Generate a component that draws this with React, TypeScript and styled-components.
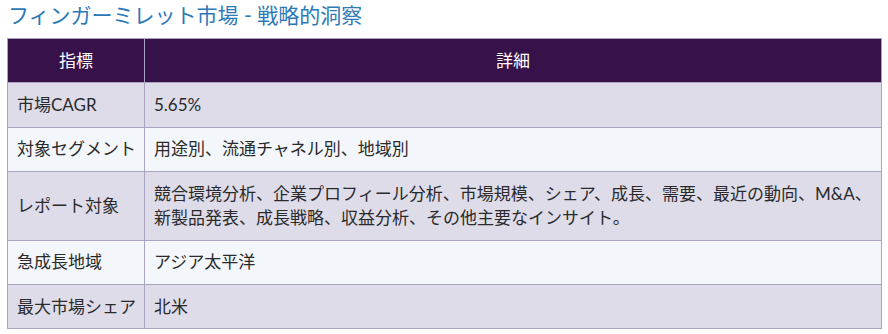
import React from "react";
import styled, { createGlobalStyle } from "styled-components";

const GlobalStyle = createGlobalStyle`
  html, body {
    margin: 0;
    padding: 0;
    background: #ffffff;
  }
  body {
    font-family: Lato, "Noto Sans CJK JP", sans-serif;
    color: #222;
  }
`;

const Page = styled.div`
  padding: 3px 7px 0 7px;
  width: 875px;
`;

const Title = styled.h3`
  margin: 0 0 11px 1px;
  font-size: 21px;
  font-weight: 400;
  line-height: 24px;
  color: #2b79b7;
`;

const Table = styled.table`
  width: 875px;
  border-collapse: collapse;
  table-layout: fixed;
  font-size: 17px;
  line-height: 24px;
`;

const HeadCell = styled.th`
  background: #371149;
  color: #ffffff;
  font-weight: 400;
  text-align: center;
  padding: 9.7px 10px;
  border: 1px solid #aaa3c2;
`;

const Row = styled.tr<{ $even: boolean }>`
  background: ${({ $even }) => ($even ? "#f3f6fa" : "#dfdcea")};
`;

const Cell = styled.td`
  padding: 9.7px 4px 9.7px 9px;
  border: 1px solid #aaa3c2;
  color: #2a2a2a;
  vertical-align: middle;
  white-space: nowrap;

  & + & {
    padding: 9.7px 9px;
    white-space: normal;
  }
`;

const rows = [
  { label: "市場CAGR", value: "5.65%" },
  { label: "対象セグメント", value: "用途別、流通チャネル別、地域別" },
  {
    label: "レポート対象",
    value:
      "競合環境分析、企業プロフィール分析、市場規模、シェア、成長、需要、最近の動向、M&A、新製品発表、成長戦略、収益分析、その他主要なインサイト。",
  },
  { label: "急成長地域", value: "アジア太平洋" },
  { label: "最大市場シェア", value: "北米" },
];

export default function App() {
  return (
    <Page>
      <GlobalStyle />
      <Title>フィンガーミレット市場 - 戦略的洞察</Title>
      <Table>
        <colgroup>
          <col style={{ width: "137px" }} />
          <col />
        </colgroup>
        <thead>
          <tr>
            <HeadCell>指標</HeadCell>
            <HeadCell>詳細</HeadCell>
          </tr>
        </thead>
        <tbody>
          {rows.map((r, i) => (
            <Row key={r.label} $even={i % 2 === 1}>
              <Cell>{r.label}</Cell>
              <Cell>{r.value}</Cell>
            </Row>
          ))}
        </tbody>
      </Table>
    </Page>
  );
}
